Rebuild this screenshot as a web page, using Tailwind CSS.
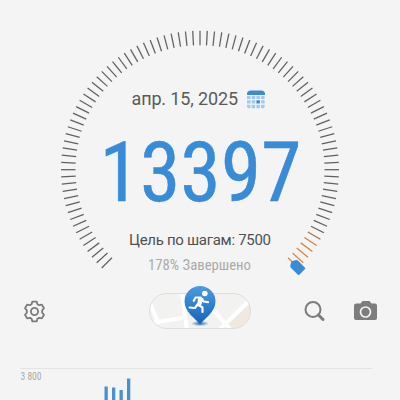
<!DOCTYPE html>
<html lang="ru">
<head>
<meta charset="utf-8">
<title>Шагомер</title>
<script src="https://cdn.jsdelivr.net/npm/@tailwindcss/browser@4"></script>
</head>
<body class="bg-[#f4f4f4] font-['Roboto','Noto_Sans',sans-serif] overflow-hidden">
<main class="w-[400px] h-[400px] flex flex-col overflow-hidden">
  <section class="grid h-[285px] shrink-0">
    <svg class="col-start-1 row-start-1" width="400" height="285" viewBox="0 0 400 285" aria-hidden="true">
      <defs>
        <radialGradient id="warm" gradientUnits="userSpaceOnUse" cx="293" cy="262" r="44">
          <stop offset="0" stop-color="#e28a3c"/><stop offset=".65" stop-color="#c98243"/><stop offset="1" stop-color="#555"/>
        </radialGradient>
      </defs>
      <g id="ticks" stroke-width="1.25"></g>
      <path transform="translate(200 169.700) rotate(135)" d="M-5-143.500V-133.500Q-5-132.500-4.200-131.800L-1-130Q0-129.500 1-130L4.200-131.800Q5-132.500 5-133.500V-143.500Q5-144.500 4-144.500H-4Q-5-144.500-5-143.500Z" fill="#388bd6"/>
    </svg>
    <div class="col-start-1 row-start-1 flex flex-col items-center pt-[89px]">
      <div class="flex items-center h-5 w-[134px] mr-1 justify-between">
        <svg width="108" height="20"><text x="0.500" y="16" font-size="18" fill="#5a5a5a" textLength="106.500">апр. 15, 2025</text></svg>
        <svg width="18" height="19" viewBox="0 0 18 19">
          <path d="M0 5V4Q0 .5 4 .5H14Q18 .5 18 4V5Z" fill="#388bd6"/>
          <g fill="#a3c9ed"><path d="M0 6h3.500v3H0zM4.700 6h3.500v3H4.700zM9.400 6h3.500v3H9.400zM14.100 6h3.500v3h-3.500zM0 10.300h3.500v3.200H0zM4.700 10.300h3.500v3.200H4.700zM14.100 10.300h3.500v3.200h-3.500zM0 14.800h3.500v3.500H2Q0 18.300 0 16.500zM4.700 14.800h3.500v3.500H4.700zM9.400 14.800h3.500v3.500H9.400zM14.100 14.800h3.500v1.700Q17.600 18.300 16 18.300h-1.900z"/></g>
          <path d="M9.400 10.300h3.500v3.200H9.400z" fill="#388bd6"/>
        </svg>
      </div>
      <svg class="mt-2" width="220" height="108"><text x="9.500" y="83.500" font-size="83" fill="#388bd6" stroke="#388bd6" stroke-width=".5" textLength="202" lengthAdjust="spacingAndGlyphs" class="font-stretch-condensed">13397</text></svg>
      <svg class="mt-1" width="150" height="24"><text x="4" y="15.500" font-size="15" fill="#505050" textLength="142">Цель по шагам: 7500</text></svg>
      <svg class="mt-1" width="110" height="20"><text x="3" y="13" font-size="15" fill="#aaa" textLength="103" lengthAdjust="spacingAndGlyphs" class="font-stretch-condensed">178% Завершено</text></svg>
    </div>
  </section>
  <nav class="flex h-[45px] shrink-0 items-start">
    <svg class="ml-[23px] mt-[15px]" width="23" height="23" viewBox="0 0 24 24" fill="none" stroke="#7b7b7b" stroke-width="1.900" stroke-linejoin="round">
      <circle cx="12" cy="12" r="3.700"/>
      <path d="M9.800 1.700h4.400l.9 2.700 1.700 1 2.900-.6 2.200 3.800-1.900 2.200v2.400l1.900 2.200-2.200 3.800-2.900-.6-1.700 1-.9 2.700H9.800l-.9-2.700-1.700-1-2.900.6-2.200-3.800L4 13.200v-2.400L2.100 8.600l2.200-3.800 2.900.6 1.700-1z"/>
    </svg>
    <svg class="ml-[102px]" width="104" height="45" viewBox="148 285 104 45">
      <defs>
        <clipPath id="pill"><rect x="149.500" y="293.500" width="101" height="35" rx="17.500"/></clipPath>
        <linearGradient id="pin" x1="0" y1="0" x2="0" y2="1"><stop offset="0" stop-color="#4c9ae0"/><stop offset=".5" stop-color="#2f80d0"/><stop offset="1" stop-color="#1c5fb4"/></linearGradient>
        <radialGradient id="shade"><stop offset="0" stop-color="#276bb0"/><stop offset="1" stop-color="#276bb0" stop-opacity="0"/></radialGradient>
      </defs>
      <rect x="149.500" y="293.500" width="101" height="35" rx="17.500" fill="#f2f2f0"/>
      <g clip-path="url(#pill)">
        <path d="M251 303L223 329H253Z" fill="#f1e8e0"/>
        <path d="M149 301L158 322L187 317M182 292L187 330M252 298L219 330M209 305L231 330M156 320V330" fill="none" stroke="#fff" stroke-width="4"/>
      </g>
      <rect x="149.500" y="293.500" width="101" height="35" rx="17.500" fill="none" stroke="#dedede"/>
      <ellipse cx="200" cy="323.500" rx="9" ry="2.800" fill="url(#shade)"/>
      <path d="M200 324.500C196 319 184.500 312 184.500 301.500A15.500 15.500 0 0 1 215.500 301.500C215.500 312 204 319 200 324.500Z" fill="url(#pin)"/>
      <circle cx="204.800" cy="293.500" r="2.800" fill="#fff"/>
      <path d="M193.800 300.800L195.500 297.500L200.500 297.500L203.500 301.500L208 302.200M200.500 299L198.500 305L202.500 307.500V312M197.500 304.500L195 308L189.500 307.500" fill="none" stroke="#fff" stroke-width="2.200" stroke-linejoin="round" stroke-linecap="round"/>
      <path d="M198.500 297L203.500 298.500L201 305.500L197 304.500Z" fill="#fff"/>
    </svg>
    <svg class="ml-[52px] mt-[15px]" width="23" height="23" viewBox="0 0 23 23" fill="none" stroke="#7c7c7c">
      <circle cx="9" cy="9.500" r="7.500" stroke-width="2"/><path d="M14.500 15L19 19.500" stroke-width="3" stroke-linecap="round"/>
    </svg>
    <svg class="ml-[27px] mt-[15px]" width="24" height="22" viewBox="0 0 24 22">
      <path d="M2.500 3.500H6.500L8.500 1H15.500L17.500 3.500H21Q23 3.500 23 5.500V18Q23 20 21 20H2Q0 20 0 18V5.500Q0 3.500 2.500 3.500Z" fill="#7d7d7d"/><circle cx="11.500" cy="12" r="5" fill="none" stroke="#f4f4f4" stroke-width="1.700"/>
    </svg>
  </nav>
  <section class="mt-[38px] ml-5 w-[352px] h-8 border-t border-[#e4e4e4] flex">
    <svg class="shrink-0" width="24" height="16"><text x="0.500" y="10.500" font-size="10" fill="#aaa" textLength="21" lengthAdjust="spacingAndGlyphs" class="font-stretch-condensed">3 800</text></svg>
    <svg class="ml-[60px]" width="30" height="31" viewBox="0 0 30 31" fill="#4a90cc">
      <path d="M.5 17.500h3.300V31H.5zM8 18.500h3.300V31H8zM15.500 21h3.300v10h-3.300zM23 9.500h3.300V31H23z"/>
    </svg>
  </section>
</main>
<script>
const g = document.getElementById('ticks');
for (let a = -135; a <= 135; a += 3) {
  const r = a * Math.PI / 180, s = Math.sin(r), c = Math.cos(r);
  const l = document.createElementNS('http://www.w3.org/2000/svg', 'line');
  l.setAttribute('x1', 200 + 124.5 * s);
  l.setAttribute('y1', 169.7 - 124.5 * c);
  l.setAttribute('x2', 200 + 139 * s);
  l.setAttribute('y2', 169.7 - 139 * c);
  l.setAttribute('stroke', a >= 117 ? 'url(#warm)' : '#606060');
  g.appendChild(l);
}
</script>
</body>
</html>
